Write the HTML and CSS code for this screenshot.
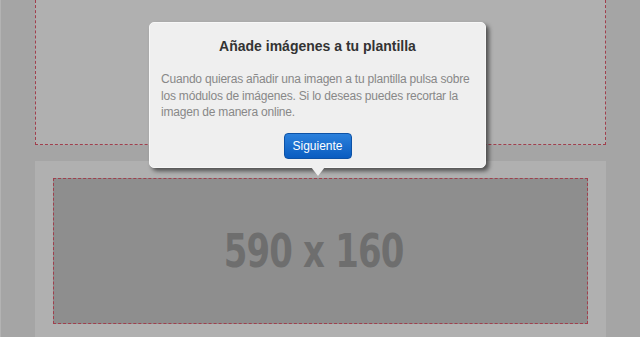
FILE: index.html
```html
<!DOCTYPE html>
<html>
<head>
    <title>Editor de plantilla</title>
    <link rel="stylesheet" href="styles.css">
</head>
<body>
    <div class="canvas">
        <div class="module module-top"></div>
        <div class="module module-image">
            <div class="placeholder">
                <span class="size">590 x 160</span>
            </div>
        </div>
    </div>

    <div class="tip">
        <h2>Añade imágenes a tu plantilla</h2>
        <p>Cuando quieras añadir una imagen a tu plantilla pulsa sobre los módulos de imágenes. Si lo deseas puedes recortar la imagen de manera online.</p>
        <div class="tip-actions">
            <button>Siguiente</button>
        </div>
    </div>
</body>
</html>
```

FILE: styles.css
```css
body {
    margin: 0;
    height: 337px;
    overflow: hidden;
    background-color: #a5a5a5;
    border-left: 1px solid #b3b3b3;
    font-family: "Liberation Sans", Arial, sans-serif;
    position: relative;
}
.canvas {
    width: 571px;
    margin-left: 34px;
}
.module {
    background-color: #b0b0b0;
}
.module-top {
    height: 144px;
    border: 1px dashed #a03f4d;
    border-top: none;
    margin-bottom: 16px;
}
.module-image {
    padding: 17px 18px 16px 18px;
}
.placeholder {
    height: 144px;
    border: 1px dashed #a03f4d;
    background-color: #8e8e8e;
    display: flex;
    align-items: center;
    justify-content: center;
    padding-right: 14px;
}
.size {
    font-family: "DejaVu Sans Condensed", "DejaVu Sans", sans-serif;
    font-weight: bold;
    font-size: 46px;
    letter-spacing: -1px;
    color: #6e6e6e;
    display: inline-block;
    transform: scaleX(0.82);
}
.tip {
    position: absolute;
    left: 148px;
    top: 22px;
    width: 313px;
    height: 144px;
    padding: 0 11px;
    background-color: #efefef;
    border: 1px solid #f7f7f7;
    border-radius: 5px;
    box-shadow: 3px 3px 4px rgba(0, 0, 0, 0.55);
}
.tip:after {
    content: "";
    position: absolute;
    left: 161px;
    bottom: -9px;
    border-left: 7px solid transparent;
    border-right: 7px solid transparent;
    border-top: 9px solid #efefef;
}
.tip h2 {
    margin: 14px 0 0 0;
    font-size: 14px;
    line-height: 19px;
    text-align: center;
    color: #333;
}
.tip p {
    margin: 15px 0 0 0;
    font-size: 12px;
    letter-spacing: -0.2px;
    line-height: 16.5px;
    color: #888;
}
.tip-actions {
    margin-top: 12px;
    text-align: center;
}
button {
    width: 68px;
    height: 26px;
    padding: 0;
    font-family: "Liberation Sans", Arial, sans-serif;
    font-size: 12px;
    color: white;
    background: linear-gradient(#2b80dc, #0a5cc0);
    border: 1px solid #0d52a6;
    border-radius: 4px;
    cursor: pointer;
}
```
